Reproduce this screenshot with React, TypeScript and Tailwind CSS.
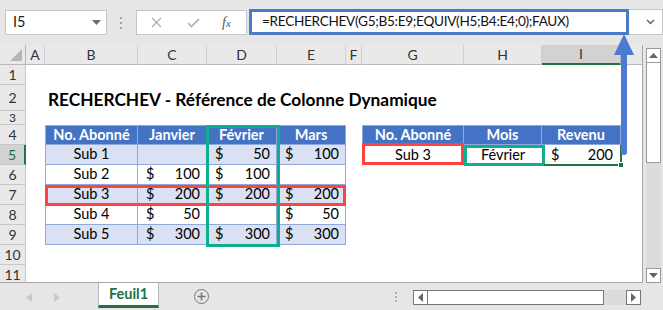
import React from "react";

const FONT = { fontFamily: "Lato, 'Open Sans', sans-serif" };

type CellKind = "hdrBlue" | "light" | "white" | "empty";

const cols = ["26px", "19px", "93px", "69px", "70px", "69px", "16px", "102px", "78px", "79px", "22px"];
const colLetters = ["", "A", "B", "C", "D", "E", "F", "G", "H", "I", ""];

function Money({ v }: { v: string }) {
  return (
    <div className="flex h-full w-full items-center justify-between pl-[8px] pr-[6px]">
      <span>$</span>
      <span>{v}</span>
    </div>
  );
}

function TCell({
  kind,
  children,
  first,
  top,
  center,
}: {
  kind: CellKind;
  children?: React.ReactNode;
  first?: boolean;
  top?: boolean;
  center?: boolean;
}) {
  const bg =
    kind === "hdrBlue" ? "bg-[#4472c4] text-white font-bold" : kind === "light" ? "bg-[#d9e1f2] text-black" : "bg-white text-black";
  return (
    <div
      className={`${bg} flex items-center border-r border-b border-[#8ea9db] text-[14.5px] leading-none ${first ? "border-l" : ""} ${
        top ? "border-t" : ""
      } ${center ? "justify-center" : ""}`}
    >
      {children}
    </div>
  );
}

function RowHdr({ n, active }: { n: string; active?: boolean }) {
  return (
    <div
      className={`flex items-center justify-center border-b border-r border-[#c8c8c8] text-[14px] leading-none ${
        active ? "bg-[#d2d2d2] text-[#1e6e42] border-r-2 border-r-[#217346]" : "bg-[#e9e9e9] text-[#333]"
      }`}
    >
      {n}
    </div>
  );
}

const Blank = () => <div className="bg-white" />;

export default function App() {
  const dataRows: { sub: string; c: string; d: string; e: string; light: boolean }[] = [
    { sub: "Sub 1", c: "", d: "50", e: "100", light: true },
    { sub: "Sub 2", c: "100", d: "100", e: "", light: false },
    { sub: "Sub 3", c: "200", d: "200", e: "200", light: true },
    { sub: "Sub 4", c: "50", d: "", e: "50", light: false },
    { sub: "Sub 5", c: "300", d: "300", e: "300", light: true },
  ];

  const gridRows: React.ReactNode[] = [];

  gridRows.push(
    <React.Fragment key="r1">
      <RowHdr n="1" />
      {Array.from({ length: 10 }).map((_, i) => (
        <Blank key={i} />
      ))}
    </React.Fragment>
  );
  gridRows.push(
    <React.Fragment key="r2">
      <RowHdr n="2" />
      <Blank />
      <div className="col-span-9 flex items-center whitespace-nowrap bg-white pl-[3px] pt-[4px] text-[17.3px] font-bold leading-none text-black">
        RECHERCHEV - Référence de Colonne Dynamique
      </div>
    </React.Fragment>
  );
  gridRows.push(
    <React.Fragment key="r3">
      <div className="flex items-center justify-center overflow-hidden border-b border-r border-[#c8c8c8] bg-[#e9e9e9] text-[12px] leading-none text-[#333]">
        3
      </div>
      {Array.from({ length: 10 }).map((_, i) => (
        <Blank key={i} />
      ))}
    </React.Fragment>
  );
  gridRows.push(
    <React.Fragment key="r4">
      <RowHdr n="4" />
      <Blank />
      <TCell kind="hdrBlue" first top center>
        No. Abonné
      </TCell>
      <TCell kind="hdrBlue" top center>
        Janvier
      </TCell>
      <TCell kind="hdrBlue" top center>
        Février
      </TCell>
      <TCell kind="hdrBlue" top center>
        Mars
      </TCell>
      <Blank />
      <TCell kind="hdrBlue" first top center>
        No. Abonné
      </TCell>
      <TCell kind="hdrBlue" top center>
        Mois
      </TCell>
      <TCell kind="hdrBlue" top center>
        Revenu
      </TCell>
      <Blank />
    </React.Fragment>
  );
  dataRows.forEach((r, i) => {
    const kind: CellKind = r.light ? "light" : "white";
    const rowNum = String(5 + i);
    gridRows.push(
      <React.Fragment key={rowNum}>
        <RowHdr n={rowNum} active={i === 0} />
        <Blank />
        <TCell kind={kind} first center>
          {r.sub}
        </TCell>
        <TCell kind={kind}>{r.c && <Money v={r.c} />}</TCell>
        <TCell kind={kind}>{r.d && <Money v={r.d} />}</TCell>
        <TCell kind={kind}>{r.e && <Money v={r.e} />}</TCell>
        <Blank />
        {i === 0 ? (
          <>
            <div className="flex items-center justify-center bg-white text-[14.5px] leading-none text-black">Sub 3</div>
            <div className="flex items-center justify-center bg-white text-[14.5px] leading-none text-black">Février</div>
            <div className="flex items-center justify-between bg-white pl-[9px] pr-[8px] text-[14.5px] leading-none text-black">
              <span>$</span>
              <span>200</span>
            </div>
          </>
        ) : (
          <>
            <Blank />
            <Blank />
            <Blank />
          </>
        )}
        <Blank />
      </React.Fragment>
    );
  });
  ["10", "11"].forEach((n) => {
    gridRows.push(
      <React.Fragment key={n}>
        <RowHdr n={n} />
        {Array.from({ length: 10 }).map((_, i) => (
          <Blank key={i} />
        ))}
      </React.Fragment>
    );
  });

  return (
    <div className="relative flex h-[310px] w-[663px] flex-col overflow-hidden bg-[#e6e6e6] text-black" style={FONT}>
      {/* Formula bar */}
      <div className="flex h-[45px] shrink-0 items-start pt-[9px]">
        <div className="ml-[5px] mt-[1px] flex h-[25px] w-[102px] items-center justify-between border border-[#c6c6c6] bg-white pl-[7px] pr-[5px] text-[14.5px] leading-none text-[#222]">
          <span>I5</span>
          <svg width="9" height="5" viewBox="0 0 9 5">
            <path d="M0 0 H9 L4.5 5 Z" fill="#6b6b6b" />
          </svg>
        </div>
        <div className="ml-[13px] mt-[8px] flex flex-col gap-[3px]">
          <div className="h-[2px] w-[2px] bg-[#a8a8a8]" />
          <div className="h-[2px] w-[2px] bg-[#a8a8a8]" />
          <div className="h-[2px] w-[2px] bg-[#a8a8a8]" />
        </div>
        <div className="ml-[14px] mt-[1px] flex h-[25px] w-[111px] items-center border border-[#c6c6c6] bg-white">
          <svg className="ml-[14px]" width="11" height="11" viewBox="0 0 11 11">
            <path d="M1 1 L10 10 M10 1 L1 10" stroke="#b0b0b0" strokeWidth="1.4" />
          </svg>
          <svg className="ml-[25px]" width="13" height="10" viewBox="0 0 13 10">
            <path d="M1 5 L4.5 8.5 L12 1" stroke="#b0b0b0" strokeWidth="1.6" fill="none" />
          </svg>
          <span className="ml-[22px] text-[14px] italic text-[#555]" style={{ fontFamily: "'Liberation Serif', serif" }}>
            f<span className="text-[11px]">x</span>
          </span>
        </div>
        <div className="ml-[2px] flex h-[26px] w-[380px] items-center whitespace-nowrap border-[3px] border-[#4a7bc9] bg-white pl-[10px] text-[13.6px] leading-none tracking-[-0.3px] text-[#111]">
          =RECHERCHEV(G5;B5:E9;EQUIV(H5;B4:E4;0);FAUX)
        </div>
        <div className="flex h-[26px] flex-1 items-center justify-end border-y border-r border-[#c6c6c6] bg-white pr-[7px]">
          <svg width="9" height="6" viewBox="0 0 9 6">
            <path d="M1 1 L4.5 4.5 L8 1" stroke="#666" strokeWidth="1.5" fill="none" />
          </svg>
        </div>
      </div>

      {/* Sheet + vertical scrollbar */}
      <div className="flex h-[238px] shrink-0">
        <div className="relative h-[238px] w-[643px] overflow-hidden border-r border-b border-[#a6a6a6] bg-white">
          <div className="grid h-[20px]" style={{ gridTemplateColumns: cols.join(" ") }}>
            {colLetters.map((l, i) =>
              i === 0 ? (
                <div key={i} className="relative border-r border-b border-[#b8b8b8] bg-[#e9e9e9]">
                  <svg className="absolute bottom-[3px] right-[3px]" width="12" height="12" viewBox="0 0 12 12">
                    <path d="M12 0 V12 H0 Z" fill="#b5b5b5" />
                  </svg>
                </div>
              ) : i === 9 ? (
                <div
                  key={i}
                  className="flex items-center justify-center border-r border-b-2 border-r-[#b8b8b8] border-b-[#217346] bg-[#d2d2d2] text-[14px] leading-none text-[#333]"
                >
                  {l}
                </div>
              ) : (
                <div
                  key={i}
                  className={`flex items-center justify-center border-b border-[#b8b8b8] bg-[#e9e9e9] text-[14px] leading-none text-[#333] ${
                    i < 10 ? "border-r border-r-[#cfcfcf]" : ""
                  }`}
                >
                  {l}
                </div>
              )
            )}
          </div>
          <div
            className="grid"
            style={{
              gridTemplateColumns: cols.join(" "),
              gridTemplateRows: "20px 26px 14px 20px 20px 20px 20px 20px 20px 20px 20px",
            }}
          >
            {gridRows}
          </div>

          <div className="pointer-events-none absolute left-[45px] top-[140px] h-[21px] w-[301px] border-[3px] border-[#ff4343]" />
          <div className="pointer-events-none absolute left-[206px] top-[80px] h-[122px] w-[74px] border-[3px] border-[#0fae8c]" />
          <div className="pointer-events-none absolute left-[362px] top-[98px] h-[22px] w-[102px] border-[3px] border-[#ff4343]" />
          <div className="pointer-events-none absolute left-[464px] top-[100px] h-[21px] w-[81px] border-[3px] border-[#0fae8c]" />
          <div className="pointer-events-none absolute left-[544px] top-[100px] h-[21px] w-[78px] border-2 border-l-0 border-t-0 border-[#217346]" />
          <div className="pointer-events-none absolute left-[618px] top-[117px] h-[6px] w-[6px] border border-white bg-[#217346]" />
        </div>
        <div className="ml-[3px] mt-[3px] flex w-[15px] flex-col bg-[#dcdcdc]">
          <div className="flex h-[15px] items-center justify-center border border-[#9a9a9a] bg-white">
            <svg width="9" height="5" viewBox="0 0 9 5">
              <path d="M0 5 H9 L4.5 0 Z" fill="#666" />
            </svg>
          </div>
          <div className="h-[100px] border border-t-0 border-[#9a9a9a] bg-white" />
          <div className="flex-1" />
          <div className="flex h-[15px] items-center justify-center border border-[#9a9a9a] bg-white">
            <svg width="9" height="5" viewBox="0 0 9 5">
              <path d="M0 0 H9 L4.5 5 Z" fill="#666" />
            </svg>
          </div>
        </div>
      </div>

      {/* Tab bar */}
      <div className="flex h-[27px] items-start">
        <div className="ml-[26px] mt-[10px] flex items-center gap-[22px]">
          <svg width="6" height="9" viewBox="0 0 6 9">
            <path d="M6 0 V9 L0 4.5 Z" fill="#c8c8c8" />
          </svg>
          <svg width="6" height="9" viewBox="0 0 6 9">
            <path d="M0 0 V9 L6 4.5 Z" fill="#c8c8c8" />
          </svg>
        </div>
        <div className="ml-[38px] flex h-[25px] w-[61px] items-center justify-center border-x border-[#b8b8b8] border-b-[3px] border-b-[#217346] bg-white text-[14.5px] font-bold leading-none text-[#217346]">
          Feuil1
        </div>
        <div className="ml-[35px] mt-[6px] flex h-[15px] w-[15px] items-center justify-center rounded-full border-[1.5px] border-[#777]">
          <svg width="9" height="9" viewBox="0 0 9 9">
            <path d="M4.5 0.5 V8.5 M0.5 4.5 H8.5" stroke="#777" strokeWidth="1.6" />
          </svg>
        </div>
        <div className="ml-[186px] mt-[9px] flex flex-col gap-[2px]">
          <div className="h-[2px] w-[2px] bg-[#b0b0b0]" />
          <div className="h-[2px] w-[2px] bg-[#b0b0b0]" />
          <div className="h-[2px] w-[2px] bg-[#b0b0b0]" />
        </div>
        <div className="ml-[16px] mt-[7px] flex h-[15px] items-stretch bg-[#dcdcdc]">
          <div className="flex w-[15px] items-center justify-center border border-[#777] bg-white">
            <svg width="5" height="9" viewBox="0 0 5 9">
              <path d="M5 0 V9 L0 4.5 Z" fill="#666" />
            </svg>
          </div>
          <div className="w-[176px] border-y border-r border-[#777] bg-white" />
          <div className="w-[22px]" />
          <div className="flex w-[15px] items-center justify-center border border-[#777] bg-white">
            <svg width="5" height="9" viewBox="0 0 5 9">
              <path d="M0 0 V9 L5 4.5 Z" fill="#666" />
            </svg>
          </div>
        </div>
      </div>

      <svg className="pointer-events-none absolute left-[613px] top-[34px]" width="22" height="123" viewBox="0 0 22 123">
        <path d="M11 0 L21 21 H14 V118 A3 3 0 0 1 8 118 V21 H1 Z" fill="#4a7bd0" />
      </svg>
    </div>
  );
}
